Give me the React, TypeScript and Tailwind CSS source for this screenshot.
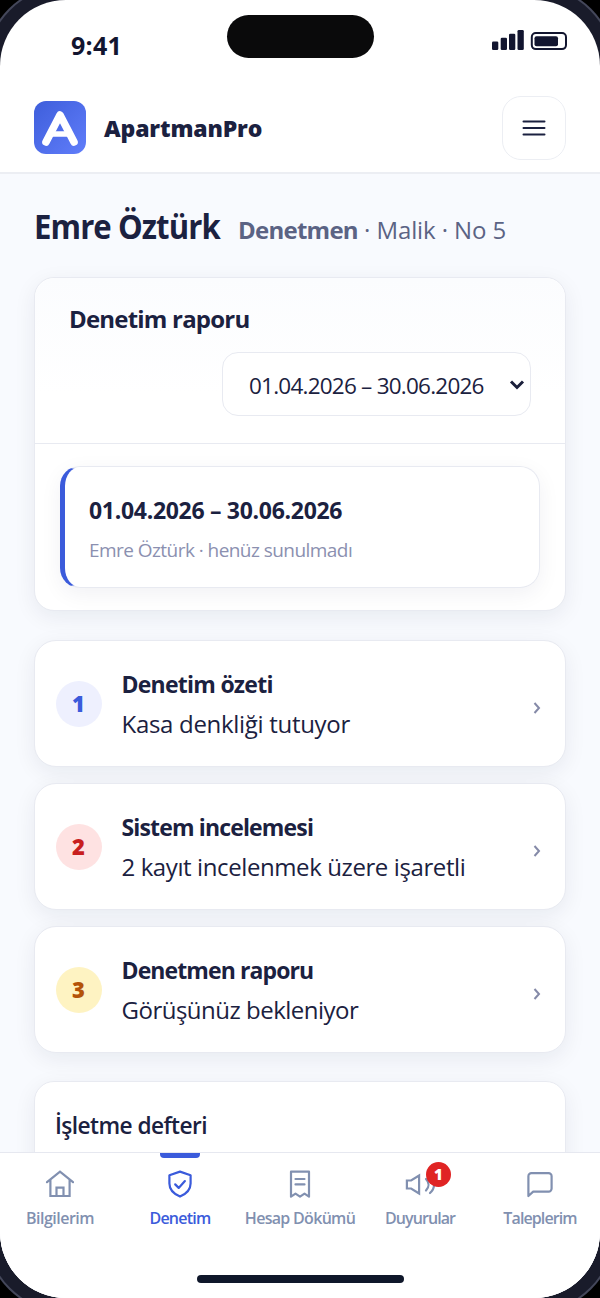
import type { ReactNode } from "react";

const steps = [
  {
    no: 1,
    title: "Denetim özeti",
    text: "Kasa denkliği tutuyor",
    color: "bg-[#eef0fe] text-[#3b5bdb]",
    titleClass: "tracking-[-0.75px]",
    textClass: "tracking-[-0.3px]",
  },
  {
    no: 2,
    title: "Sistem incelemesi",
    text: "2 kayıt incelenmek üzere işaretli",
    color: "bg-[#fee2e2] text-[#c81e1e]",
    titleClass: "tracking-[-0.85px]",
    textClass: "tracking-[-0.4px]",
  },
  {
    no: 3,
    title: "Denetmen raporu",
    text: "Görüşünüz bekleniyor",
    color: "bg-[#fef3c2] text-[#b45309]",
    titleClass: "tracking-[-0.9px]",
    textClass: "tracking-[-0.5px]",
  },
];

const NavIcon = ({ children }: { children: ReactNode }) => (
  <svg
    width="32"
    height="32"
    viewBox="0 0 32 32"
    fill="none"
    stroke="currentColor"
    strokeWidth="2.2"
    strokeLinecap="round"
    strokeLinejoin="round"
  >
    {children}
  </svg>
);

const navItems = [
  {
    label: "Bilgilerim",
    labelClass: "tracking-[-0.5px]",
    icon: (
      <NavIcon>
        <path d="M3 14.2 16 3.6l13 10.6M6.4 11.8V28h19.2V11.8M12.5 28v-8.4h7V28" strokeLinejoin="miter" />
      </NavIcon>
    ),
  },
  {
    label: "Denetim",
    labelClass: "tracking-[-0.75px]",
    active: true,
    icon: (
      <NavIcon>
        <path d="M16 3.6 26.6 7.2v8.3c0 6-4.4 10.4-10.6 13.1C9.8 25.9 5.4 21.5 5.4 15.5V7.2z" />
        <path d="m11.2 16.4 3.5 3.5 6.2-6.8" />
      </NavIcon>
    ),
  },
  {
    label: "Hesap Dökümü",
    labelClass: "tracking-[-0.7px]",
    icon: (
      <NavIcon>
        <path d="M7 3.7h18v25l-4.5-3-4.5 3-4.5-3-4.5 3z" />
        <path d="M11.5 11h9M11.5 16.4h9" />
      </NavIcon>
    ),
  },
  {
    label: "Duyurular",
    labelClass: "tracking-[-0.9px]",
    badge: 1,
    icon: (
      <NavIcon>
        <path d="M2.9 12.5h4.2l8-5v18l-8-5H2.9z" strokeLinejoin="miter" />
        <path d="M22 11c3.3 3.5 3.3 8 0 11.5M26 8c5.4 5.5 5.4 12 0 17" />
      </NavIcon>
    ),
  },
  {
    label: "Taleplerim",
    labelClass: "tracking-[-0.9px]",
    icon: (
      <NavIcon>
        <path d="M4.4 28V8.2a3 3 0 0 1 3-3h17.2a3 3 0 0 1 3 3v12.4a3 3 0 0 1-3 3H9.2z" />
      </NavIcon>
    ),
  },
];

const StatusBar = () => (
  <div className="flex h-[83px] items-start justify-between pl-[71px] pr-[33px]">
    <span className="mt-[29px] text-[25px] leading-8 font-bold tracking-[0.3px] text-[#12152f]">9:41</span>
    <div className="absolute top-[15px] left-[227px] h-[43px] w-[147px] rounded-full bg-[#0a0a0b]" />
    <svg className="mt-[29px]" width="75" height="22" viewBox="0 0 75 22" fill="#12152f">
      <rect x="0" y="12.5" width="6.3" height="8.5" rx="1.3" />
      <rect x="8.7" y="8.7" width="6.3" height="12.3" rx="1.3" />
      <rect x="17" y="4.8" width="6.3" height="16.2" rx="1.3" />
      <rect x="25.5" y="1" width="6.3" height="20" rx="1.3" />
      <rect x="39.8" y="4.1" width="34.2" height="16" rx="4" fill="none" stroke="#12152f" strokeWidth="2" />
      <rect x="42.5" y="7.2" width="23.5" height="10" rx="2" />
    </svg>
  </div>
);

const Header = () => (
  <header className="flex h-[91px] items-center border-b-2 border-[#eceef3] pr-[34px] pl-[34px]">
    <svg width="52" height="53" viewBox="0 0 52 53" fill="none">
      <defs>
        <linearGradient id="logo" x1="0" y1="0" x2="1" y2="1">
          <stop offset="0" stopColor="#3e5edb" />
          <stop offset="1" stopColor="#607dfa" />
        </linearGradient>
      </defs>
      <rect width="52" height="53" rx="12" fill="url(#logo)" />
      <path d="M12 41 26 14l14 27" stroke="#fff" strokeWidth="7.6" strokeLinecap="round" strokeLinejoin="round" />
      <path d="M17 33h18" stroke="#fff" strokeWidth="5.5" />
    </svg>
    <span className="mt-px ml-[18px] text-[23px] leading-8 font-extrabold tracking-[-0.15px]">ApartmanPro</span>
    <button className="mt-px ml-auto flex h-16 w-16 items-center justify-center rounded-[19px] border-[1.5px] border-[#eceef3]">
      <svg width="24" height="18" viewBox="0 0 24 18" stroke="#1b2140" strokeWidth="2" strokeLinecap="round">
        <path d="M1.5 2.5h21M1.5 9h21M1.5 15.5h21" />
      </svg>
    </button>
  </header>
);

const ReportCard = () => (
  <section className="mt-[28px] h-[334px] rounded-[20px] border border-[#e8eaf1] bg-white shadow-[0_6px_22px_rgba(20,25,60,0.07)]">
    <div className="flex h-[166px] flex-col rounded-t-[20px] border-b-[1.5px] border-[#e8eaf1] bg-linear-to-b from-[#fbfcfe] to-white to-70% px-[34px]">
      <h2 className="mt-[25px] text-[24px] leading-8 font-bold tracking-[-0.8px]">Denetim raporu</h2>
      <button className="mt-[17px] flex h-16 w-[309px] items-center justify-between self-end rounded-2xl border-[1.5px] border-[#e8eaf1] bg-white pr-[5px] pl-[26px]">
        <span className="mt-1 text-[22.5px] tracking-[-0.77px]">01.04.2026 – 30.06.2026</span>
        <svg className="mt-0.5" width="16" height="12" viewBox="0 0 16 12" fill="none" stroke="#1b1f3b" strokeWidth="3">
          <path d="m2 2.5 6 6 6-6" />
        </svg>
      </button>
    </div>
    <div className="mt-[22px] ml-[25px] h-[122px] w-[480px] rounded-[20px] border border-l-[5px] border-[#e8eaf1] border-l-[#3b5bdb] pl-[24px] shadow-[0_6px_22px_rgba(20,25,60,0.06)]">
      <p className="mt-[27px] text-[23px] leading-8 font-bold tracking-[-0.3px]">01.04.2026 – 30.06.2026</p>
      <p className="mt-[10px] text-[19px] leading-7 tracking-[-0.55px] text-[#8b90b0]">Emre Öztürk · henüz sunulmadı</p>
    </div>
  </section>
);

const BottomNav = () => (
  <nav className="absolute bottom-0 left-0 flex h-[146px] w-[600px] border-t-[1.5px] border-[#e6e8f0] bg-white">
    {navItems.map((item) => (
      <div
        key={item.label}
        className={`relative flex w-[120px] flex-col items-center pt-[15px] ${
          item.active ? "text-[#3b5bdb]" : "text-[#8190b0]"
        }`}
      >
        {item.active && <span className="absolute top-0 h-[5px] w-10 rounded-b-[4px] bg-[#3b5bdb]" />}
        {item.icon}
        <span className={`mt-1.5 text-[16px] leading-6 font-semibold whitespace-nowrap ${item.labelClass}`}>{item.label}</span>
        {item.badge && (
          <span className="absolute top-[9px] left-[66px] flex h-[25px] w-[25px] items-center justify-center rounded-full bg-[#e02424] text-[15px] font-extrabold text-white">
            {item.badge}
          </span>
        )}
      </div>
    ))}
    <span className="absolute bottom-[15px] left-[197px] h-[8px] w-[207px] rounded-full bg-[#0f172a]" />
  </nav>
);

const App = () => {
  return (
    <div className="h-[1298px] w-[600px] overflow-hidden bg-black font-['Open_Sans','Noto_Sans',sans-serif] text-[#1b2140]">
      <div className="relative h-full overflow-hidden rounded-[66px] bg-white shadow-[0_0_0_13px_#191b2a,0_0_0_15px_#44475a]">
        <StatusBar />
        <Header />
        <main className="h-[1124px] bg-[#f8fafe] px-[34px] pt-[30px]">
          <div className="flex h-[45px] items-baseline whitespace-nowrap">
            <h1 className="w-[187px] origin-left scale-x-[0.915] text-[34px] leading-[45px] font-bold tracking-[-1px]">Emre Öztürk</h1>
            <p className="ml-[17px] text-[24px] text-[#5b6384]">
              <b className="font-bold tracking-[-0.75px]">Denetmen</b> <span className="tracking-[-0.1px]">· Malik · No 5</span>
            </p>
          </div>
          <ReportCard />
          <div className="mt-[29px] flex flex-col gap-4">
            {steps.map((step) => (
              <div
                key={step.no}
                className="flex h-[127px] items-center rounded-[22px] border border-[#e8eaf1] bg-white pr-[23px] pl-[20.5px] shadow-[0_6px_22px_rgba(20,25,60,0.07)]"
              >
                <span className={`flex h-[46px] w-[46px] items-center justify-center rounded-full text-[22px] font-extrabold ${step.color}`}>
                  {step.no}
                </span>
                <div className="ml-[20px] whitespace-nowrap">
                  <h3 className={`text-[23px] leading-[39px] font-bold ${step.titleClass}`}>{step.title}</h3>
                  <p className={`text-[24px] leading-[39px] ${step.textClass}`}>{step.text}</p>
                </div>
                <svg className="mt-[8px] ml-auto" width="10" height="12" viewBox="0 0 10 12" fill="none" stroke="#858aa8" strokeWidth="2">
                  <path d="m2.5 1 4.5 5-4.5 5" />
                </svg>
              </div>
            ))}
          </div>
          <section className="mt-[28px] h-[200px] rounded-[20px] border border-[#e8eaf1] bg-white px-5 pt-[27px] shadow-[0_6px_22px_rgba(20,25,60,0.07)]">
            <h2 className="origin-left scale-x-[0.945] text-[24px] leading-8 font-semibold tracking-[-0.6px]">İşletme defteri</h2>
          </section>
        </main>
        <BottomNav />
      </div>
    </div>
  );
};

export default App;
